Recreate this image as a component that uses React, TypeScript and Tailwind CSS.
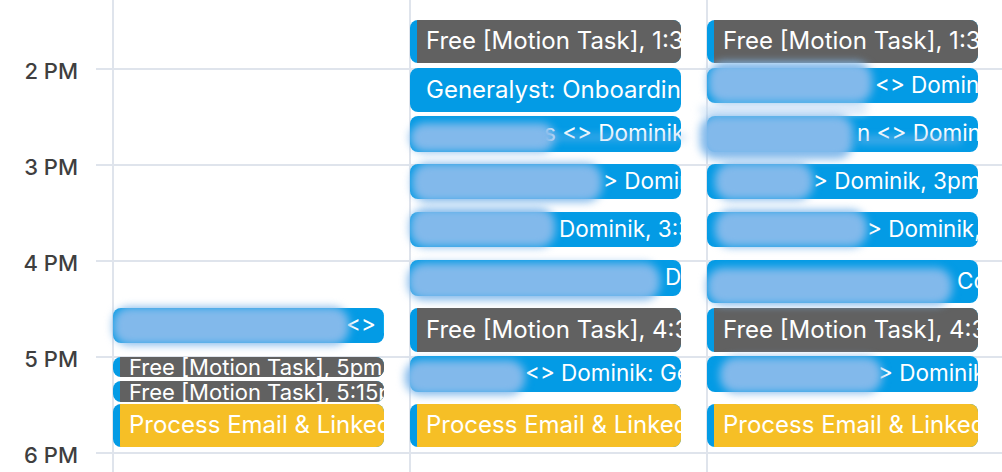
import React from "react";

type Blob = { l: number; t: number; w: number; h: number; light?: boolean };
type Ev = {
  top: number;
  h: number;
  kind: "blue" | "gray" | "yellow";
  text: string;
  indent?: number;
  small?: boolean;
  blobs?: Blob[];
};

const columns: Ev[][] = [
  [
    { top: 308, h: 35, kind: "blue", text: "<> Dominik, 4:30pm", indent: 233, blobs: [{ l: 0, t: -1, w: 236, h: 38 }] },
    { top: 357, h: 20, kind: "gray", text: "Free [Motion Task], 5pm", small: true },
    { top: 381, h: 21, kind: "gray", text: "Free [Motion Task], 5:15pm", small: true },
    { top: 404, h: 43, kind: "yellow", text: "Process Email & LinkedIn, 5:30pm" },
  ],
  [
    { top: 20, h: 43, kind: "gray", text: "Free [Motion Task], 1:30pm" },
    { top: 68, h: 44, kind: "blue", text: "Generalyst: Onboarding, 2pm" },
    {
      top: 116, h: 36, kind: "blue", text: "s <> Dominik, 2:30pm", indent: 134,
      blobs: [{ l: 0, t: 7, w: 145, h: 29 }, { l: 140, t: 20, w: 135, h: 3 }],
    },
    { top: 164, h: 35, kind: "blue", text: "> Dominik, 3pm", indent: 193, blobs: [{ l: 2, t: -1, w: 190, h: 39 }] },
    { top: 212, h: 35, kind: "blue", text: "Dominik, 3:30pm", indent: 149, blobs: [{ l: 0, t: -4, w: 145, h: 39 }] },
    { top: 260, h: 36, kind: "blue", text: "Dominik, 4pm", indent: 255, blobs: [{ l: -2, t: 3, w: 252, h: 37 }] },
    { top: 308, h: 44, kind: "gray", text: "Free [Motion Task], 4:30pm" },
    { top: 356, h: 36, kind: "blue", text: "<> Dominik: Generalyst", indent: 115, blobs: [{ l: -5, t: 4, w: 120, h: 35 }] },
    { top: 404, h: 43, kind: "yellow", text: "Process Email & LinkedIn, 5:30pm" },
  ],
  [
    { top: 20, h: 43, kind: "gray", text: "Free [Motion Task], 1:30pm" },
    {
      top: 68, h: 35, kind: "blue", text: "<> Dominik, 2pm", indent: 168,
      blobs: [{ l: 1, t: -6, w: 164, h: 41 }, { l: -7, t: 39, w: 167, h: 6, light: true }],
    },
    {
      top: 116, h: 36, kind: "blue", text: "n <> Dominik, 2:30pm", indent: 150,
      blobs: [{ l: -7, t: -1, w: 153, h: 44 }, { l: 150, t: 22, w: 105, h: 4 }],
    },
    { top: 164, h: 35, kind: "blue", text: "> Dominik, 3pm", indent: 106, blobs: [{ l: 8, t: -1, w: 98, h: 37 }] },
    { top: 212, h: 35, kind: "blue", text: "> Dominik, 3:30pm", indent: 160, blobs: [{ l: 8, t: -2, w: 152, h: 37 }] },
    { top: 260, h: 43, kind: "blue", text: "Coffee chat, 4pm", indent: 250, blobs: [{ l: 0, t: 8, w: 245, h: 37 }] },
    { top: 308, h: 44, kind: "gray", text: "Free [Motion Task], 4:30pm" },
    { top: 356, h: 36, kind: "blue", text: "> Dominik: Generalyst", indent: 171, blobs: [{ l: 13, t: 1, w: 162, h: 36 }] },
    { top: 404, h: 43, kind: "yellow", text: "Process Email & LinkedIn, 5:30pm" },
  ],
];

const hours = ["2 PM", "3 PM", "4 PM", "5 PM", "6 PM"];

function Event({ ev }: { ev: Ev }) {
  const inner =
    ev.kind === "gray" ? "ml-[7px] bg-[#616161] pl-[9px]" : ev.kind === "yellow" ? "ml-[7px] bg-[#f6bf26] pl-[9px]" : "pl-[16px]";
  const size = ev.small ? "text-[22px]" : ev.indent ? "text-[22.5px] pb-[1px]" : "text-[24px] pb-[1px]";
  return (
    <div
      className="absolute left-[-1px] w-[271px] rounded-[8px] bg-[#039be5] overflow-hidden flex"
      style={{ top: ev.top, height: ev.h }}
    >
      <div
        className={`flex-1 flex items-center whitespace-nowrap overflow-hidden text-white leading-none ${inner} ${size}`}
        style={ev.indent ? { paddingLeft: ev.indent } : undefined}
      >
        {ev.text}
      </div>
    </div>
  );
}

export default function App() {
  return (
    <div className="w-[1002px] h-[472px] overflow-hidden bg-white flex font-['Inter',sans-serif]">
      <div className="w-[112px] shrink-0 pt-[21px]">
        {hours.map((h) => (
          <div key={h} className="h-[96px] flex items-center justify-end">
            <span className="text-[22px] font-medium text-[#3f3f3f] leading-none pt-[3px]">{h}</span>
            <div className="ml-[18px] w-[16px] h-[2px] bg-[#dfe4ec]" />
          </div>
        ))}
      </div>
      {columns.map((col, i) => (
        <div key={i} className="relative w-[297px] shrink-0 border-l-2 border-[#dfe4ec]">
          <div className="h-[68px]" />
          {hours.map((h) => (
            <div key={h} className="h-[96px] border-t-2 border-[#dfe4ec]" />
          ))}
          {col.map((ev, j) => (
            <Event key={j} ev={ev} />
          ))}
          {col.flatMap((ev, j) =>
            (ev.blobs || []).map((b, k) => (
              <div
                key={`${j}-${k}`}
                className={`absolute rounded-[16px] blur-[4px] ${b.light ? "bg-[#c6def5]" : "bg-[#82b9eb]"}`}
                style={{ left: b.l - 1, top: ev.top + b.t, width: b.w, height: b.h }}
              />
            ))
          )}
        </div>
      ))}
    </div>
  );
}
